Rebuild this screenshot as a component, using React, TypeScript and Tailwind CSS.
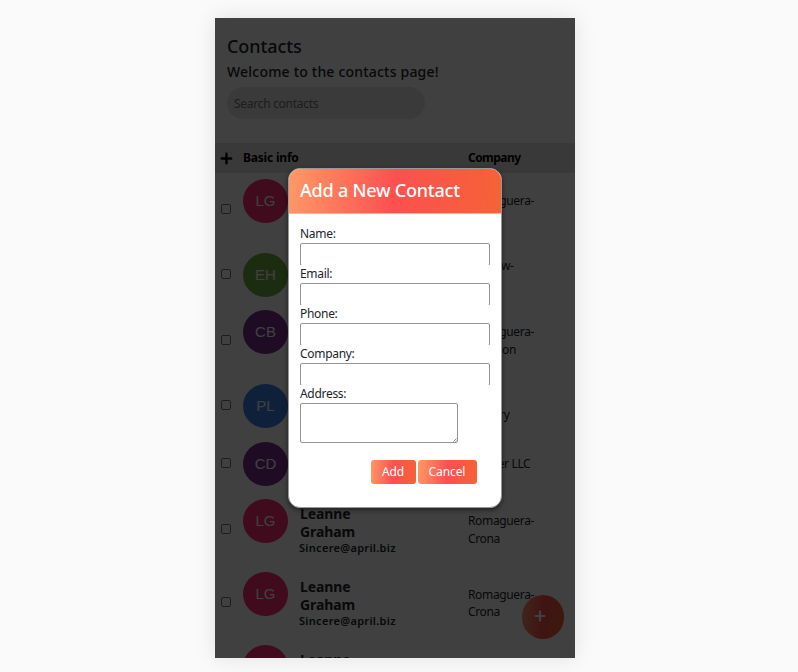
import type { ReactNode } from "react";

type Row = {
  initials: string;
  color: string;
  height: string;
  offset: string;
  name: [string, string];
  email: string;
  company: string[];
};

const rows: Row[] = [
  { initials: "LG", color: "bg-[#ff2d73]", height: "h-[72px]", offset: "pt-[6px]", name: ["Leanne", "Graham"], email: "Sincere@april.biz", company: ["Romaguera-", "Crona"] },
  { initials: "EH", color: "bg-[#70b040]", height: "h-[58px]", offset: "pt-[8px]", name: ["Ervin", "Howell"], email: "Shanna@melissa.tv", company: ["Deckow-", "Crist"] },
  { initials: "CB", color: "bg-[#7c3090]", height: "h-[74px]", offset: "pt-[7px]", name: ["Clementine", "Bauch"], email: "Nathan@yesenia.net", company: ["Romaguera-", "Jacobson"] },
  { initials: "PL", color: "bg-[#3c84e8]", height: "h-[57px]", offset: "pt-[7px]", name: ["Patricia", "Lebsack"], email: "Julianne@kory.org", company: ["Robel-", "Corkery"] },
  { initials: "CD", color: "bg-[#7c3090]", height: "h-[58px]", offset: "pt-[8px]", name: ["Chelsey", "Dietrich"], email: "Lucio@annie.ca", company: ["Keebler LLC"] },
  { initials: "LG", color: "bg-[#ff2d73]", height: "h-[74px]", offset: "pt-[7px]", name: ["Leanne", "Graham"], email: "Sincere@april.biz", company: ["Romaguera-", "Crona"] },
  { initials: "LG", color: "bg-[#ff2d73]", height: "h-[73px]", offset: "pt-[6px]", name: ["Leanne", "Graham"], email: "Sincere@april.biz", company: ["Romaguera-", "Crona"] },
  { initials: "LG", color: "bg-[#ff2d73]", height: "h-[73px]", offset: "pt-[6px]", name: ["Leanne", "Graham"], email: "Sincere@april.biz", company: ["Romaguera-", "Crona"] },
];

function Plus({ className }: { className: string }) {
  return (
    <svg viewBox="0 0 12 12" className={className} fill="none" stroke="currentColor" strokeWidth="2.2" strokeLinecap="round">
      <path d="M6 1.6v8.8M1.6 6h8.8" />
    </svg>
  );
}

function ContactRow({ row }: { row: Row }) {
  return (
    <div className={`flex shrink-0 ${row.height}`}>
      <div className="flex w-[28px] items-center pb-px pl-[6px]">
        <span className="size-[10px] rounded-[2px] border border-[#767676]" />
      </div>
      <div className={`flex w-[225px] ${row.offset}`}>
        <div className={`flex h-[44px] w-[45px] shrink-0 items-center justify-center rounded-full font-['Liberation_Sans',sans-serif] text-[15px] text-white ${row.color}`}>
          {row.initials}
        </div>
        <div className="ml-[12px] mt-[6px]">
          <p className="text-[14px] font-bold leading-[18px] tracking-[-0.1px]">
            {row.name[0]}
            <br />
            {row.name[1]}
          </p>
          <p className="-ml-px text-[11px] font-semibold leading-[13px] tracking-[0.3px] whitespace-nowrap">{row.email}</p>
        </div>
      </div>
      <div className="flex flex-col justify-center pt-px text-[12px] leading-[17.5px] tracking-[-0.35px] text-[#212529]">
        {row.company.map((line) => (
          <span key={line} className="whitespace-nowrap">{line}</span>
        ))}
      </div>
    </div>
  );
}

function Field({ label }: { label: string }) {
  return (
    <label className="block h-[40px]">
      <span className="block h-[19px] leading-[20px] tracking-[-0.3px]">{label}</span>
      <span className="block h-[22px] overflow-hidden">
        <input className="block h-[23px] w-[190px] rounded-[2px] border border-[#949494] bg-white px-1 outline-none" />
      </span>
    </label>
  );
}

function GradientButton({ width, children }: { width: string; children: ReactNode }) {
  return (
    <button className={`h-[24px] rounded-[3px] bg-[linear-gradient(95deg,#ff9966,#fc5050_50%,#f56336)] text-[12px] tracking-[-0.1px] text-white ${width}`}>
      {children}
    </button>
  );
}

export default function App() {
  return (
    <div className="flex h-[672px] w-[798px] justify-start overflow-hidden bg-[#fafafa] pt-[18px] pl-[215px] font-['Noto_Sans',sans-serif] text-[#212529]">
      <div className="relative h-[640px] w-[360px] shadow-[0_0_20px_rgba(0,0,0,0.1)]">
        <div className="flex h-full flex-col overflow-hidden bg-white">
          <header className="h-[125px] shrink-0 pl-[12px] pt-[17px]">
            <h1 className="text-[18px] font-medium leading-[22px] tracking-[-0.1px]">Contacts</h1>
            <h2 className="mt-[6px] text-[14px] font-medium leading-[18px] tracking-[0.2px]">Welcome to the contacts page!</h2>
            <input className="mt-[6px] block h-[32px] w-[198px] rounded-[16px] bg-[#e6e6e6] px-[7px] text-[12px] tracking-[-0.28px] placeholder:text-[#757575]" placeholder="Search contacts" />
          </header>
          <div className="flex h-[30px] shrink-0 items-center bg-[#e4e4e4] text-[12px] font-bold tracking-[-0.2px] text-black">
            <div className="w-[28px] pl-[5px]"><Plus className="size-[13px]" /></div>
            <span className="w-[225px]">Basic info</span>
            <span className="tracking-[-0.55px]">Company</span>
          </div>
          {rows.map((row, i) => (
            <ContactRow key={i} row={row} />
          ))}
        </div>
        <button className="absolute left-[307px] top-[577px] flex h-[44px] w-[42px] items-center justify-center rounded-[21px] bg-[linear-gradient(95deg,#ff9966,#fc5050_50%,#f56336)] text-white">
          <Plus className="mr-[6px] mb-[3px] size-[12px]" />
        </button>
        <div className="absolute inset-0 bg-black/75 pl-[73px] pt-[150px]">
          <section className="h-[340px] w-[214px] overflow-hidden rounded-[12px] border border-[#999] bg-white shadow-[0_2px_5px_rgba(0,0,0,0.5)]">
            <h3 className="h-[45px] border-b border-[#ffb0a0] bg-[linear-gradient(95deg,#ff9966,#fc5050_50%,#f56336)] pl-[11px] text-[18px] font-medium leading-[43px] tracking-[-0.22px] text-white">
              Add a New Contact
            </h3>
            <form className="pl-[11px] pt-[10px] text-[12px]">
              <Field label="Name:" />
              <Field label="Email:" />
              <Field label="Phone:" />
              <Field label="Company:" />
              <label className="block">
                <span className="block h-[19px] leading-[20px] tracking-[-0.3px]">Address:</span>
                <span className="flex h-[40px] w-[158px] items-end rounded-[2px] border border-[#949494]">
                  <textarea className="h-full min-w-0 flex-1 resize-none outline-none" />
                  <svg viewBox="0 0 4 4" className="size-[4px] shrink-0" stroke="#777" strokeWidth="0.8">
                    <path d="M0.5 3.5l3-3M2.5 3.5l1-1" />
                  </svg>
                </span>
              </label>
              <div className="mt-[17px] flex gap-[2px] pl-[70.5px]">
                <GradientButton width="w-[45px]">Add</GradientButton>
                <GradientButton width="w-[59px]">Cancel</GradientButton>
              </div>
            </form>
          </section>
        </div>
      </div>
    </div>
  );
}
